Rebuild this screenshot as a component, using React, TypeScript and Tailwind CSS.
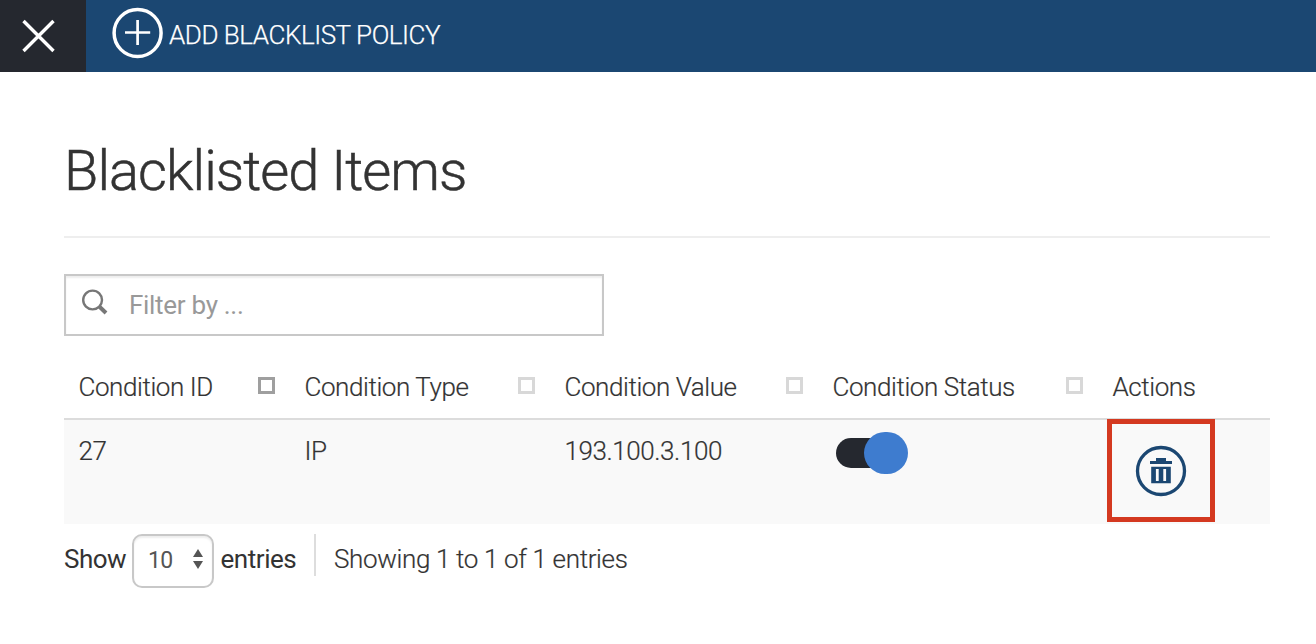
import React from "react";

const columns = [
  { label: "Condition ID", box: "border-[#9f9f9f]" },
  { label: "Condition Type", box: "border-[#d8d8d8]" },
  { label: "Condition Value", box: "border-[#d8d8d8]" },
  { label: "Condition Status", box: "border-[#d8d8d8]" },
];

const grid = "grid grid-cols-[226px_260px_268px_280px_172px]";

function TopBar() {
  return (
    <header className="flex h-[72px] bg-[#1b4772] text-white">
      <button className="flex h-[72px] w-[86px] items-center justify-center bg-[#25282f] pr-[9px]">
        <svg width="34" height="34" viewBox="0 0 34 34" fill="none" stroke="currentColor" strokeWidth="3.4">
          <path d="M1.5 2L31.5 32M31.5 2L1.5 32" />
        </svg>
      </button>
      <button className="flex h-[70px] items-center pl-[26px] text-[26px] font-light">
        <svg className="mt-[-4px]" width="52" height="52" viewBox="0 0 52 52" fill="none" stroke="currentColor">
          <circle cx="25.6" cy="26" r="23.5" strokeWidth="3.5" />
          <path d="M13 25.5H38.2M25.6 12.9V38.1" strokeWidth="2.7" />
        </svg>
        <span className="ml-[5px] whitespace-nowrap tracking-[-0.45px] [-webkit-text-stroke:0.25px_currentColor]">
          ADD BLACKLIST POLICY
        </span>
      </button>
    </header>
  );
}

function Filter() {
  return (
    <label className="mt-9 flex h-[62px] w-[540px] items-center border-2 border-[#c8c8c8] bg-white pl-4 shadow-[inset_0_2px_2px_rgba(0,0,0,0.07)]">
      <svg className="mt-[-5px] shrink-0" width="27" height="27" viewBox="0 0 27 27" fill="none" stroke="#777">
        <circle cx="10.6" cy="11" r="9.4" strokeWidth="2.4" />
        <path d="M17 17.3L24 24" strokeWidth="4" />
      </svg>
      <input
        className="ml-5 w-[440px] bg-transparent text-[26px] font-normal tracking-[-0.3px] text-[#444] outline-none placeholder:text-[#999]"
        placeholder="Filter by ..."
      />
    </label>
  );
}

function TrashButton() {
  return (
    <button className="ml-[-6px] flex h-[103px] w-[108px] items-center justify-center border-[5px] border-[#d43920]">
      <svg width="52" height="52" viewBox="0 0 52 52">
        <circle cx="26" cy="26" r="23.5" fill="none" stroke="#1b4772" strokeWidth="3.3" />
        <path
          fill="#1b4772"
          fillRule="evenodd"
          d="M21 13h10v3h6v3H15v-3h6zM16.2 21.7h19.6v16.5H16.2zM20.9 24v12h2.8V24zM28.3 24v12h2.8V24z"
        />
      </svg>
    </button>
  );
}

function Table() {
  return (
    <div className="mt-5 w-[1206px] [-webkit-text-stroke:0.2px_currentColor]">
      <div className={`${grid} h-16 border-b-2 border-[#dcdcdc]`}>
        {columns.map((column) => (
          <div key={column.label} className="flex h-[62px] items-center justify-between pr-[15px] pl-[14.5px]">
            <span className="whitespace-nowrap">{column.label}</span>
            <span className={`-mt-1 size-[17px] border-[3px] ${column.box}`} />
          </div>
        ))}
        <div className="flex h-[62px] items-center pl-[14.5px]">Actions</div>
      </div>
      <div className={`${grid} h-[104px] bg-[#f9f9f9]`}>
        <div className="h-[62px] pl-[14.5px] leading-[62px]">27</div>
        <div className="h-[62px] pl-[14.5px] leading-[62px]">IP</div>
        <div className="h-[62px] pl-[14.5px] leading-[62px]">193.100.3.100</div>
        <div className="pt-3 pl-[18px]">
          <div className="relative h-[42px] w-[72px]">
            <div className="absolute top-[6px] left-0 h-[30px] w-14 rounded-full bg-[#25282f]" />
            <div className="absolute top-0 right-0 h-[42px] w-11 rounded-full bg-[#3e7ccf]" />
          </div>
        </div>
        <div className="-mt-px pl-[15px]">
          <TrashButton />
        </div>
      </div>
    </div>
  );
}

function Footer() {
  return (
    <div className="flex pt-[10px] leading-[50px] whitespace-nowrap">
      <span className="w-[68px] font-normal tracking-[-0.55px]">Show</span>
      <div className="flex h-[54px] w-[82px] items-center justify-between rounded-[10px] border-2 border-[#c8c8c8] pr-[9px] pl-[14px] text-[23px] font-normal text-[#555] shadow-[inset_0_2px_2px_rgba(0,0,0,0.07)]">
        <span className="tracking-[-0.6px]">10</span>
        <svg className="-mt-1" width="10" height="20" viewBox="0 0 10 20" fill="#555">
          <path d="M5 0L10 8H0zM5 20L0 12H10z" />
        </svg>
      </div>
      <span className="ml-[6.5px] w-[93.5px] font-normal tracking-[-0.45px]">entries</span>
      <span className="h-[42px] w-[2px] bg-[#ddd]" />
      <span className="ml-[18px] tracking-[-0.35px] [-webkit-text-stroke:0.2px_currentColor]">
        Showing 1 to 1 of 1 entries
      </span>
    </div>
  );
}

export default function App() {
  return (
    <div className="h-[644px] w-[1316px] overflow-hidden bg-white font-['Roboto',sans-serif] text-[26px] font-light tracking-[-0.42px] text-[#333]">
      <TopBar />
      <main className="pr-[46px] pl-16">
        <h1 className="h-[166px] w-[1206px] border-b-2 border-[#eee] pt-[59px] text-[56px] leading-[80px] font-light tracking-[-0.95px] [-webkit-text-stroke:0.5px_currentColor]">
          Blacklisted Items
        </h1>
        <Filter />
        <Table />
        <Footer />
      </main>
    </div>
  );
}
